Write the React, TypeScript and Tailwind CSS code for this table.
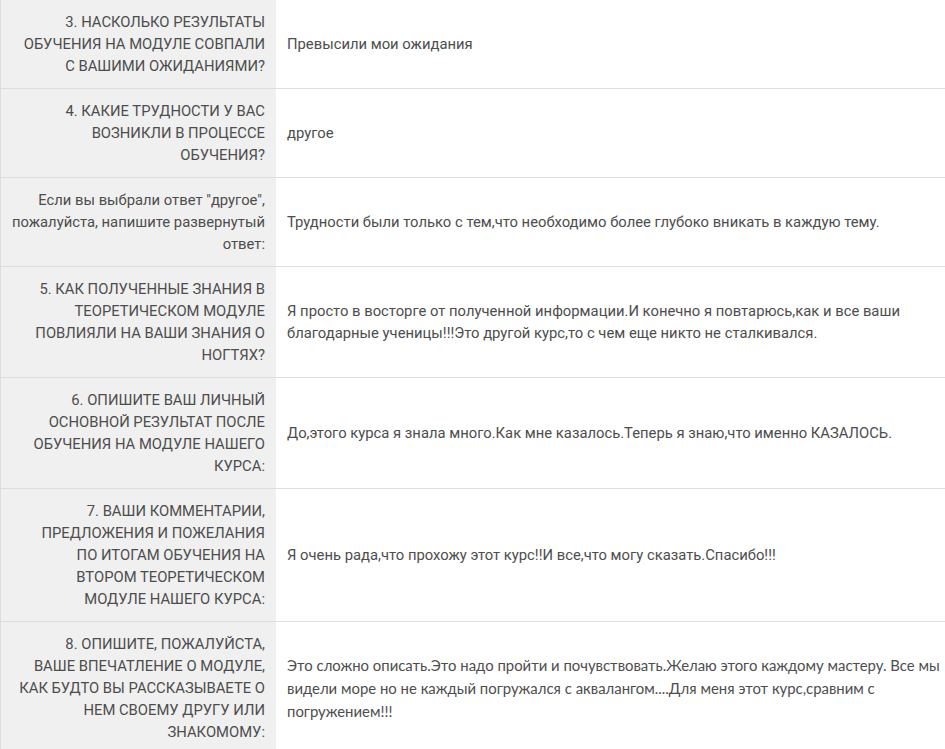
import React from "react";

const rows: { q: string[]; a: string[]; narrow?: boolean }[] = [
  {
    q: ["3. НАСКОЛЬКО РЕЗУЛЬТАТЫ", "ОБУЧЕНИЯ НА МОДУЛЕ СОВПАЛИ", "С ВАШИМИ ОЖИДАНИЯМИ?"],
    a: ["Превысили мои ожидания"],
  },
  {
    q: ["4. КАКИЕ ТРУДНОСТИ У ВАС", "ВОЗНИКЛИ В ПРОЦЕССЕ", "ОБУЧЕНИЯ?"],
    a: ["другое"],
  },
  {
    q: ['Если вы выбрали ответ "другое",', "пожалуйста, напишите развернутый", "ответ:"],
    a: ["Трудности были только с тем,что необходимо более глубоко вникать в каждую тему."],
  },
  {
    q: ["5. КАК ПОЛУЧЕННЫЕ ЗНАНИЯ В", "ТЕОРЕТИЧЕСКОМ МОДУЛЕ", "ПОВЛИЯЛИ НА ВАШИ ЗНАНИЯ О", "НОГТЯХ?"],
    a: [
      "Я просто в восторге от полученной информации.И конечно я повтарюсь,как и все ваши",
      "благодарные ученицы!!!Это другой курс,то с чем еще никто не сталкивался.",
    ],
  },
  {
    q: ["6. ОПИШИТЕ ВАШ ЛИЧНЫЙ", "ОСНОВНОЙ РЕЗУЛЬТАТ ПОСЛЕ", "ОБУЧЕНИЯ НА МОДУЛЕ НАШЕГО", "КУРСА:"],
    a: ["До,этого курса я знала много.Как мне казалось.Теперь я знаю,что именно КАЗАЛОСЬ."],
  },
  {
    q: ["7. ВАШИ КОММЕНТАРИИ,", "ПРЕДЛОЖЕНИЯ И ПОЖЕЛАНИЯ", "ПО ИТОГАМ ОБУЧЕНИЯ НА", "ВТОРОМ ТЕОРЕТИЧЕСКОМ", "МОДУЛЕ НАШЕГО КУРСА:"],
    a: ["Я очень рада,что прохожу этот курс!!И все,что могу сказать.Спасибо!!!"],
  },
  {
    q: ["8. ОПИШИТЕ, ПОЖАЛУЙСТА,", "ВАШЕ ВПЕЧАТЛЕНИЕ О МОДУЛЕ,", "КАК БУДТО ВЫ РАССКАЗЫВАЕТЕ О", "НЕМ СВОЕМУ ДРУГУ ИЛИ", "ЗНАКОМОМУ:"],
    a: [
      "Это сложно описать.Это надо пройти и почувствовать.Желаю этого каждому мастеру. Все мы",
      "видели море но не каждый погружался с аквалангом....Для меня этот курс,сравним с",
      "погружением!!!",
    ],
    narrow: true,
  },
];

export default function App() {
  return (
    <div
      className="w-[945px] h-[749px] overflow-hidden bg-white text-[14.8px] leading-[22px] text-[#4d4d4d]"
      style={{ fontFamily: "Roboto, Lato, sans-serif" }}
    >
      <div className="border-l border-[#dddddd]">
        {rows.map((r, i) => (
          <div key={i} className="flex border-b border-[#dddddd]">
            <div className="w-[275px] shrink-0 bg-[#f0f0f0] px-[11px] py-[11px] text-right flex items-center justify-end">
              <div>
                {r.q.map((l, j) => (
                  <div key={j} className="whitespace-nowrap">{l}</div>
                ))}
              </div>
            </div>
            <div
              className={
                r.narrow
                  ? "flex-1 px-[11px] py-[11px] flex items-center font-['Lato',sans-serif] text-[14.9px] leading-[23px]"
                  : "flex-1 px-[11px] py-[11px] flex items-center"
              }
            >
              <div>
                {r.a.map((l, j) => (
                  <div key={j} className="whitespace-nowrap">{l}</div>
                ))}
              </div>
            </div>
          </div>
        ))}
      </div>
    </div>
  );
}
